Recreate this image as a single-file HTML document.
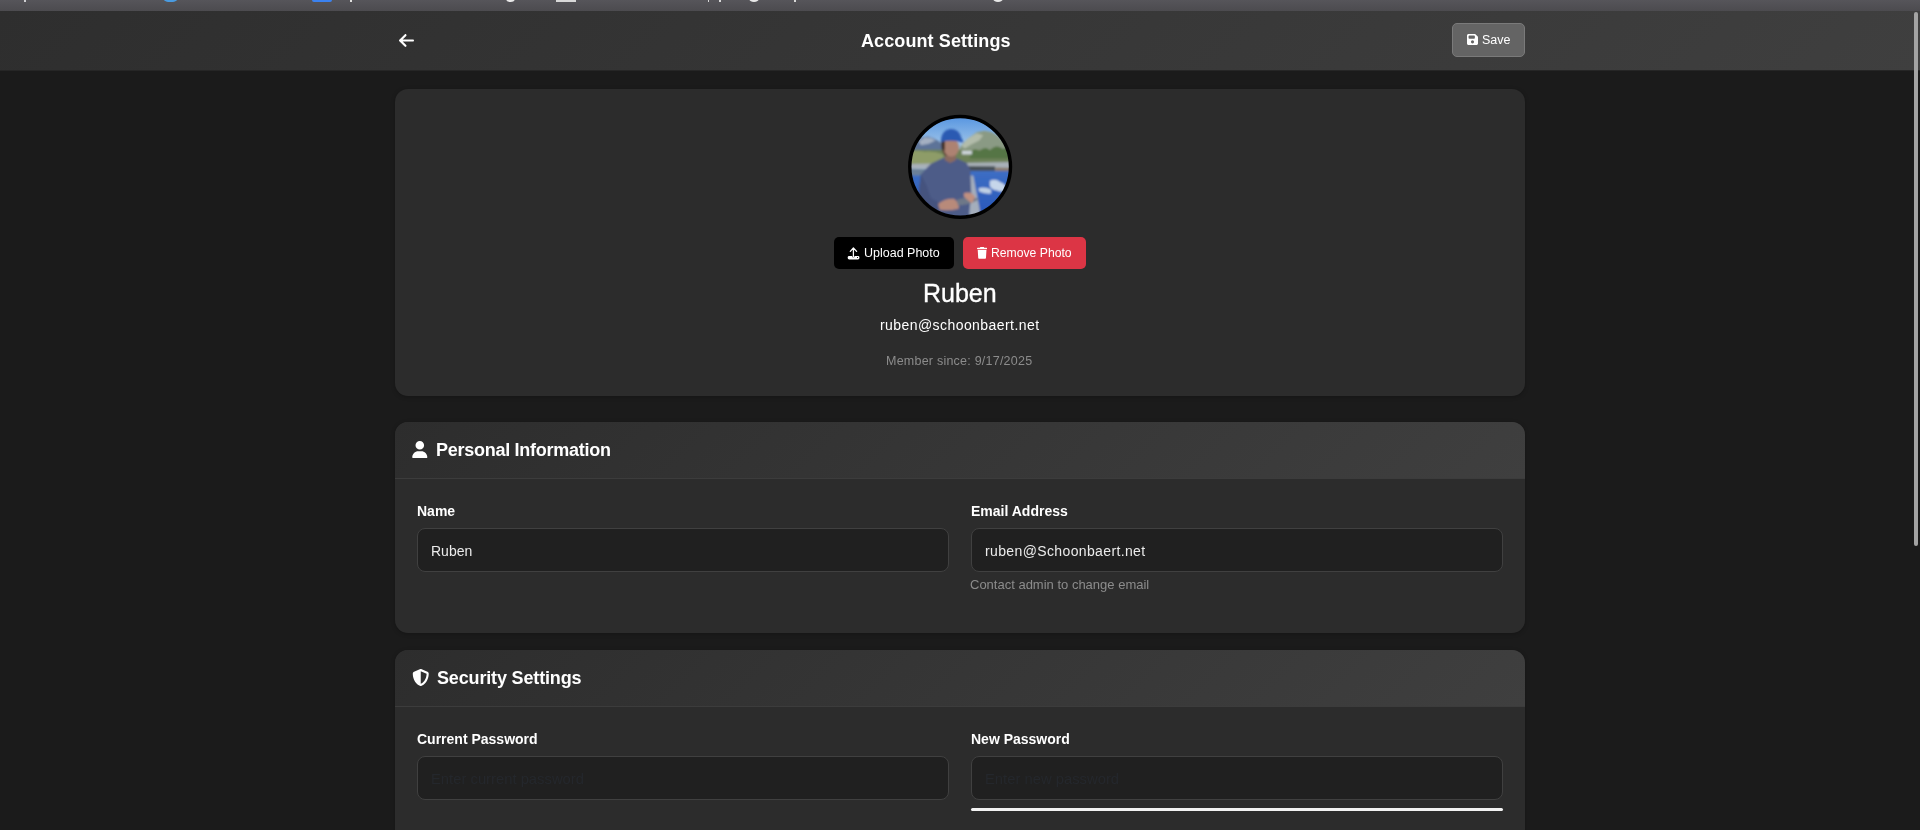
<!DOCTYPE html>
<html>
<head>
<meta charset="utf-8">
<style>
*{box-sizing:border-box;margin:0;padding:0}
html,body{width:1920px;height:830px;overflow:hidden;background:#1b1b1b;font-family:"Liberation Sans",sans-serif;color:#fff;-webkit-font-smoothing:antialiased}
.t{will-change:transform}
.abs{position:absolute}
.t{position:absolute;white-space:nowrap;line-height:1}
#topbar{position:absolute;left:0;top:0;width:1920px;height:11px;background:linear-gradient(#56555a,#4c4b4f)}
#header{position:absolute;left:0;top:11px;width:1920px;height:60px;background:linear-gradient(135deg,#2e2e2e 0%,#3f3f3f 100%);border-bottom:1px solid #262626}
.card{position:absolute;left:395px;width:1130px;background:#2c2c2c;border-radius:13px;overflow:hidden;box-shadow:0 1px 4px rgba(0,0,0,0.25)}
.chead{position:absolute;left:0;top:0;width:100%;height:57px;background:linear-gradient(135deg,#2d2d2d 0%,#3f3f3f 100%);border-bottom:1px solid #3c3c3c}
.ctitle{font-weight:bold;font-size:18px}
.label{font-weight:bold;font-size:14px}
.input{position:absolute;width:532px;height:44px;background:#202020;border:1px solid #404040;border-radius:8px}
.itext{font-size:14px;color:#ebebeb}
.ph{font-size:14.8px;color:#24272c}
#scroll{position:absolute;left:1913.5px;top:12px;width:4.5px;height:534px;background:#a3a3a3;border-radius:3px}
</style>
</head>
<body>
<div id="topbar"></div>
<div class="abs" style="left:24px;top:0;width:2px;height:1.5px;background:#cfcfd2"></div>
<div class="abs" style="left:162.5px;top:-3px;width:15px;height:5px;background:#4a9be0;border-radius:0 0 6px 6px"></div>
<div class="abs" style="left:312px;top:-3px;width:19.5px;height:5px;background:#3b82f0;border-radius:0 0 2px 2px"></div>
<div class="abs" style="left:349.5px;top:0;width:2.5px;height:2px;background:#e0e0e0"></div>
<div class="abs" style="left:506px;top:-5px;width:8.5px;height:7px;background:#e8e8e8;border-radius:50%"></div>
<div class="abs" style="left:556px;top:-2px;width:20px;height:4px;background:#d8d8d8"></div>
<div class="abs" style="left:707.5px;top:0;width:1.5px;height:2px;background:#d8d8d8"></div>
<div class="abs" style="left:718.5px;top:0;width:2px;height:2px;background:#d8d8d8"></div>
<div class="abs" style="left:749px;top:-5px;width:10px;height:7px;background:#e8e8e8;border-radius:50%"></div>
<div class="abs" style="left:793.5px;top:0;width:2.5px;height:2px;background:#d8d8d8"></div>
<div class="abs" style="left:992.5px;top:-5px;width:10px;height:7px;background:#e8e8e8;border-radius:50%"></div>
<div id="header"></div>
<div class="t" style="left:860.5px;top:31.8px;font-size:18px;font-weight:bold;letter-spacing:0.1px">Account Settings</div>

<!-- back arrow -->
<svg class="abs" style="left:399px;top:34px" width="15" height="13" viewBox="0 0 448 384">
<path fill="#fff" d="M9.4 169.4c-12.5 12.5-12.5 32.8 0 45.3l160 160c12.5 12.5 32.8 12.5 45.3 0s12.5-32.8 0-45.3L109.2 224 416 224c17.7 0 32-14.3 32-32s-14.3-32-32-32l-306.7 0L214.6 54.6c12.5-12.5 12.5-32.8 0-45.3s-32.8-12.5-45.3 0l-160 160z"/>
</svg>

<!-- Save button -->
<div class="abs" style="left:1452px;top:23px;width:73px;height:34px;background:#646464;border:1px solid #7a7a7a;border-radius:5px"></div>
<svg class="abs" style="left:1467px;top:34.3px" width="11" height="11" viewBox="0 32 448 448">
<path fill="#fff" d="M64 32C28.7 32 0 60.7 0 96V416c0 35.3 28.7 64 64 64H384c35.3 0 64-28.7 64-64V173.3c0-17-6.7-33.3-18.7-45.3L352 50.7C340 38.7 323.7 32 306.7 32H64zm0 96c0-17.7 14.3-32 32-32H288c17.7 0 32 14.3 32 32v64c0 17.7-14.3 32-32 32H96c-17.7 0-32-14.3-32-32V128zM224 288a64 64 0 1 1 0 128 64 64 0 1 1 0-128z"/>
</svg>
<div class="t" style="left:1482px;top:34.4px;font-size:12.5px">Save</div>

<!-- Profile card -->
<div class="card" style="top:89px;height:307px"></div>

<!-- avatar -->
<svg class="abs" style="left:905px;top:112px" width="110" height="110" viewBox="0 0 830 830">
<defs>
<clipPath id="cp"><circle cx="416" cy="414" r="372"/></clipPath>
<linearGradient id="sky" x1="0" y1="0" x2="0" y2="1"><stop offset="0" stop-color="#4b8ee0"/><stop offset="0.28" stop-color="#98c0e8"/><stop offset="1" stop-color="#a8c8e8"/></linearGradient>
<linearGradient id="water" x1="0" y1="0" x2="0" y2="1"><stop offset="0" stop-color="#3d6ec4"/><stop offset="1" stop-color="#2553b8"/></linearGradient>
<filter id="bl" x="-10%" y="-10%" width="120%" height="120%"><feGaussianBlur stdDeviation="8"/></filter>
</defs>
<g clip-path="url(#cp)">
<rect x="0" y="0" width="830" height="830" fill="url(#sky)"/>
<g filter="url(#bl)">
<path d="M40 300 L85 230 L125 192 L170 185 L215 198 L255 220 L290 250 L300 310 Z" fill="#5d7398"/>
<path d="M105 220 L150 192 L200 198 L230 215 L180 240 L120 250Z" fill="#a4b0c2"/>
<path d="M400 300 L425 250 L470 205 L540 152 L600 142 L650 150 L700 178 L745 222 L800 265 L800 320 Z" fill="#8a9a84"/>
<path d="M425 250 L475 200 L540 160 L590 175 L560 215 L500 245 L450 275Z" fill="#b2bcaa"/>
<rect x="20" y="285" width="790" height="110" fill="#6d8158"/>
<path d="M20 300 Q80 285 150 300 Q220 292 290 320 L290 395 L20 395Z" fill="#8e9c68"/>
<path d="M490 330 Q520 250 560 300 Q600 250 640 290 Q690 235 740 280 Q780 255 810 270 L810 350 L490 350Z" fill="#557545"/>
<rect x="430" y="292" width="75" height="28" fill="#cfd6dc"/>
<path d="M20 392 L810 378 L810 418 L20 428Z" fill="#a8b0b8"/>
<path d="M480 408 L680 410 L680 450 L480 450Z" fill="#475058"/>
<path d="M680 418 L810 420 L810 455 L680 455Z" fill="#8a7a6a"/>
<rect x="20" y="445" width="790" height="400" fill="url(#water)"/>
<path d="M20 428 L480 440 L480 480 L20 480Z" fill="#6a8098"/>
<path d="M640 520 Q680 500 720 530 Q760 540 770 590 Q730 610 690 590 Q660 590 640 560Z" fill="#c6d6ea"/>
<path d="M555 575 Q600 560 650 585 L650 615 Q600 620 560 600Z" fill="#c0d0e4"/>
<path d="M480 480 L515 480 L565 740 L560 800 L485 800 Z" fill="#a4aebc"/>
<path d="M290 345 L380 345 L465 385 L492 430 L500 620 L480 800 L220 820 L140 730 L100 640 L120 470 L195 390Z" fill="#4d5c88"/>
<path d="M120 470 L100 640 L140 730 L250 750 L265 690 L195 650 L165 560Z" fill="#44527e"/>
<path d="M305 295 L380 295 L385 362 L340 385 L300 362Z" fill="#8a6a5e"/>
<ellipse cx="348" cy="268" rx="60" ry="68" fill="#ad8272"/>
<path d="M285 245 Q288 300 322 332 L302 332 Q272 300 277 240Z" fill="#5e463a"/>
<path d="M272 205 L302 205 L300 290 L278 285Z" fill="#3b2c24"/>
<path d="M272 222 Q270 140 340 128 Q410 125 425 195 L445 232 Q360 205 272 226Z" fill="#2c5ab2"/>
<path d="M250 695 Q300 650 370 655 Q415 690 405 730 Q330 748 262 738Z" fill="#b88a7a"/>
<path d="M390 662 Q470 635 562 655 Q500 700 400 705Z" fill="#6e7888"/>
<path d="M445 612 Q500 595 530 640 L505 690 Q465 660 445 640Z" fill="#c09080"/>
</g>
</g>
<circle cx="416" cy="414" r="380" fill="none" stroke="#000" stroke-width="26"/>
</svg>

<!-- Upload button -->
<div class="abs" style="left:834px;top:237px;width:120px;height:32px;background:#000;border-radius:5px"></div>
<svg class="abs" style="left:844px;top:244px" width="20" height="18" viewBox="0 0 20 18">
<path d="M3.7 13.3 Q3.7 11.9 5.1 11.9 H8.2 Q8.4 13.6 9.4 13.6 Q10.4 13.6 10.6 11.9 H14 Q15.4 11.9 15.4 13.3 V14 Q15.4 15.4 14 15.4 H5.1 Q3.7 15.4 3.7 14 Z" fill="#fff"/>
<circle cx="13.5" cy="13.5" r="0.55" fill="#000"/>
<path d="M6.3 7.4 L9.4 4 L12.6 7.4 M9.4 4.3 V12.8" stroke="#fff" stroke-width="1.25" fill="none" stroke-linecap="round" stroke-linejoin="round"/>
</svg>
<div class="t" style="left:863.5px;top:247.4px;font-size:12.5px">Upload Photo</div>

<!-- Remove button -->
<div class="abs" style="left:962.5px;top:237px;width:123.5px;height:32px;background:#dc3545;border-radius:5px"></div>
<svg class="abs" style="left:977px;top:247.3px" width="10.2" height="11.9" viewBox="0 0 448 512">
<path fill="#fff" d="M135.2 17.7L128 32H32C14.3 32 0 46.3 0 64S14.3 96 32 96H416c17.7 0 32-14.3 32-32s-14.3-32-32-32H320l-7.2-14.3C307.4 6.8 296.3 0 284.2 0H163.8c-12.1 0-23.2 6.8-28.6 17.7zM416 128H32L53.2 467c1.6 25.3 22.6 45 47.9 45H346.9c25.3 0 46.3-19.7 47.9-45L416 128z"/>
</svg>
<div class="t" style="left:991.3px;top:247.3px;font-size:12.2px">Remove Photo</div>

<div class="t" style="left:923px;top:280.6px;font-size:25px;-webkit-text-stroke:0.35px #fff">Ruben</div>
<div class="t" style="left:880px;top:318px;font-size:14px;letter-spacing:0.43px">ruben@schoonbaert.net</div>
<div class="t" style="left:886px;top:354.6px;font-size:12.5px;letter-spacing:0.23px;color:#8c8c8c">Member since: 9/17/2025</div>

<!-- Personal info card -->
<div class="card" style="top:422px;height:211px"><div class="chead"></div></div>
<svg class="abs" style="left:412.3px;top:441.3px" width="15.6" height="17.2" viewBox="0 0 448 512">
<path fill="#fff" d="M224 256A128 128 0 1 0 224 0a128 128 0 1 0 0 256zm-45.7 48C79.8 304 0 383.8 0 482.3C0 498.7 13.3 512 29.7 512H418.3c16.4 0 29.7-13.3 29.7-29.7C448 383.8 368.2 304 269.7 304H178.3z"/>
</svg>
<div class="t ctitle" style="left:435.5px;top:440.6px;letter-spacing:-0.27px">Personal Information</div>
<div class="t label" style="left:417px;top:504.2px">Name</div>
<div class="input" style="left:417px;top:528px"></div>
<div class="t itext" style="left:431.2px;top:544px">Ruben</div>
<div class="t label" style="left:970.6px;top:503.9px">Email Address</div>
<div class="input" style="left:971px;top:528px"></div>
<div class="t itext" style="left:985.3px;top:544.4px;letter-spacing:0.37px">ruben@Schoonbaert.net</div>
<div class="t" style="left:970px;top:578.4px;font-size:13px;color:#8c8c8c">Contact admin to change email</div>

<!-- Security card -->
<div class="card" style="top:650px;height:300px"><div class="chead"></div></div>
<svg class="abs" style="left:412.2px;top:669.2px" width="17.5" height="17" viewBox="16 0 480 512">
<path fill="#fff" d="M256 0c4.600 0 9.2 1 13.4 2.9L457.7 82.8c22 9.3 38.4 31 38.3 57.2c-.5 99.2-41.3 280.7-213.6 363.2c-16.7 8-36.1 8-52.8 0C57.3 420.7 16.5 239.2 16 140c-.1-26.2 16.3-47.9 38.3-57.2L242.7 2.9C246.8 1 251.4 0 256 0zm0 66.8V444.8C394 378 431.1 230.1 432 141.4L256 66.8l0 0z"/>
</svg>
<div class="t ctitle" style="left:437px;top:669.2px;letter-spacing:-0.16px">Security Settings</div>
<div class="t label" style="left:417px;top:732.1px">Current Password</div>
<div class="input" style="left:417px;top:756px"></div>
<div class="t ph" style="left:431.3px;top:772px">Enter current password</div>
<div class="t label" style="left:970.6px;top:732.3px">New Password</div>
<div class="input" style="left:971px;top:756px"></div>
<div class="t ph" style="left:985.3px;top:772px">Enter new password</div>
<div class="abs" style="left:971px;top:808px;width:532px;height:3.2px;background:#f2f2f2;border-radius:2px"></div>

<div id="scroll"></div>
</body>
</html>
